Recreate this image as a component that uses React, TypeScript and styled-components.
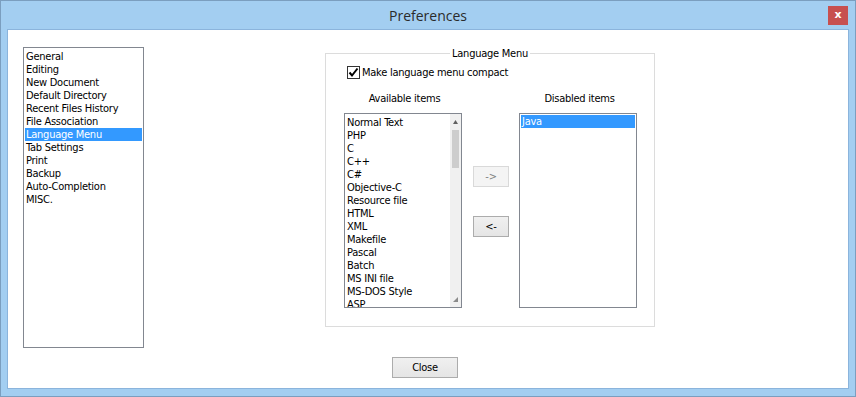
import { styled, createGlobalStyle } from 'styled-components';

const GlobalStyle = createGlobalStyle`
  html, body {
    margin: 0;
    padding: 0;
    background: #ffffff;
  }
  * {
    box-sizing: border-box;
  }
`;

const Frame = styled.div`
  width: 856px;
  height: 397px;
  display: flex;
  flex-direction: column;
  padding: 0 6px 7px;
  background: #a3cef1;
  border: 1px solid #7b9ebf;
  font-family: 'DejaVu Sans Condensed', 'Liberation Sans', sans-serif;
  font-size: 11px;
  letter-spacing: -0.25px;
  color: #000;
`;

const TitleBar = styled.div`
  height: 28px;
  display: grid;
  grid-template-columns: 1fr auto 1fr;
  align-items: center;
`;

const Title = styled.div`
  grid-column: 2;
  font-family: 'Open Sans', 'Noto Sans', sans-serif;
  font-size: 14px;
  letter-spacing: 0;
  color: #2b2b2b;
  line-height: 20px;
  padding-top: 1px;
`;

const CloseX = styled.div`
  grid-column: 3;
  justify-self: end;
  margin-right: 1px;
  width: 20px;
  height: 19px;
  background: #c75050;
  color: #fff;
  font-family: 'DejaVu Sans', sans-serif;
  font-weight: bold;
  font-size: 11px;
  letter-spacing: 0;
  line-height: 18px;
  text-align: center;
`;

const Client = styled.div`
  flex: 1;
  display: flex;
  flex-direction: column;
  background: #ffffff;
  border: 1px solid #8bb4dc;
`;

const MainRow = styled.div`
  display: flex;
  align-items: flex-start;
  padding: 17px 0 0 15px;
`;

const ListBox = styled.div<{ $w: number; $h: number }>`
  width: ${({ $w }) => $w}px;
  height: ${({ $h }) => $h}px;
  border: 1px solid #828790;
  background: #fff;
  display: flex;
  overflow: hidden;
`;

const Items = styled.div<{ $top?: number }>`
  flex: 1;
  padding: ${({ $top }) => $top ?? 1}px 1px 1px;
  overflow: hidden;
`;

const Item = styled.div<{ $selected?: boolean }>`
  height: 13px;
  line-height: 13px;
  padding-left: 1px;
  white-space: nowrap;
  background: ${({ $selected }) => ($selected ? '#3399ff' : 'transparent')};
  color: ${({ $selected }) => ($selected ? '#ffffff' : '#000000')};
`;

const ScrollBar = styled.div`
  width: 11px;
  display: flex;
  flex-direction: column;
  align-items: center;
  background: #f0f0f0;
`;

const ScrollArrow = styled.div`
  height: 15px;
  width: 100%;
  display: flex;
  align-items: center;
  justify-content: center;
`;

const Thumb = styled.div`
  width: 7px;
  height: 38px;
  margin-top: 1px;
  background: #cdcdcd;
`;

const ScrollSpacer = styled.div`
  flex: 1;
`;

const Group = styled.fieldset`
  margin: 0 0 0 181px;
  width: 330px;
  padding: 0 9px 18px;
  border: 1px solid #dcdcdc;
`;

const Legend = styled.legend`
  margin: 0 auto;
  padding: 0 2px;
  line-height: 13px;
`;

const GroupBody = styled.div`
  padding-left: 9px;
`;

const CheckRow = styled.label`
  display: flex;
  align-items: center;
  gap: 2px;
  height: 13px;
  margin: 6px 0 0 3px;
`;

const CheckBox = styled.span`
  width: 13px;
  height: 13px;
  border: 1px solid #333;
  background: #fff;
  display: flex;
  align-items: center;
  justify-content: center;
`;

const Columns = styled.div`
  display: flex;
  align-items: flex-start;
  margin-top: 13px;
`;

const Column = styled.div<{ $gap?: number }>`
  display: flex;
  flex-direction: column;
  align-items: center;
  margin-left: ${({ $gap }) => $gap ?? 0}px;
`;

const ColumnLabel = styled.div`
  height: 13px;
  line-height: 13px;
  margin-bottom: 8px;
  padding-left: 3px;
`;

const ButtonStack = styled.div`
  display: flex;
  flex-direction: column;
  gap: 29px;
  margin: 74px 0 0 11px;
`;

const PushButton = styled.button<{ $w: number; $disabled?: boolean }>`
  width: ${({ $w }) => $w}px;
  height: 21px;
  padding: 0;
  font-family: inherit;
  font-size: 11px;
  letter-spacing: -0.25px;
  border: 1px solid ${({ $disabled }) => ($disabled ? '#d9d9d9' : '#acacac')};
  background: ${({ $disabled }) => ($disabled ? '#f4f4f4' : 'linear-gradient(#f0f0f0, #e5e5e5)')};
  color: ${({ $disabled }) => ($disabled ? '#838383' : '#000')};
`;

const Footer = styled.div`
  display: flex;
  padding: 9px 0 0 384px;
`;

const navItems = [
  'General',
  'Editing',
  'New Document',
  'Default Directory',
  'Recent Files History',
  'File Association',
  'Language Menu',
  'Tab Settings',
  'Print',
  'Backup',
  'Auto-Completion',
  'MISC.',
];

const availableItems = [
  'Normal Text',
  'PHP',
  'C',
  'C++',
  'C#',
  'Objective-C',
  'Resource file',
  'HTML',
  'XML',
  'Makefile',
  'Pascal',
  'Batch',
  'MS INI file',
  'MS-DOS Style',
  'ASP',
];

const App = () => {
  return (
    <>
      <GlobalStyle />
      <Frame>
        <TitleBar>
          <Title>Preferences</Title>
          <CloseX>x</CloseX>
        </TitleBar>
        <Client>
          <MainRow>
            <ListBox $w={121} $h={301}>
              <Items $top={2}>
                {navItems.map((n) => (
                  <Item key={n} $selected={n === 'Language Menu'}>
                    {n}
                  </Item>
                ))}
              </Items>
            </ListBox>
            <Group>
              <Legend>Language Menu</Legend>
              <GroupBody>
                <CheckRow>
                  <CheckBox>
                    <svg width='11' height='11' viewBox='0 0 11 11'>
                      <path d='M1.5 5.5 L4 8.5 L9.5 1.5' fill='none' stroke='#000' strokeWidth='2' />
                    </svg>
                  </CheckBox>
                  Make language menu compact
                </CheckRow>
                <Columns>
                  <Column>
                    <ColumnLabel>Available items</ColumnLabel>
                    <ListBox $w={118} $h={195}>
                      <Items $top={2}>
                        {availableItems.map((n) => (
                          <Item key={n}>{n}</Item>
                        ))}
                      </Items>
                      <ScrollBar>
                        <ScrollArrow>
                          <svg width='5' height='4' viewBox='0 0 5 4'>
                            <path d='M0 4 L2.5 0 L5 4 Z' fill='#606060' />
                          </svg>
                        </ScrollArrow>
                        <Thumb />
                        <ScrollSpacer />
                        <ScrollArrow>
                          <svg width='5' height='5' viewBox='0 0 5 5'>
                            <path d='M5 0 L5 5 L0 5 Z' fill='#8a8a8a' />
                          </svg>
                        </ScrollArrow>
                      </ScrollBar>
                    </ListBox>
                  </Column>
                  <ButtonStack>
                    <PushButton $w={36} $disabled>
                      -&gt;
                    </PushButton>
                    <PushButton $w={36}>&lt;-</PushButton>
                  </ButtonStack>
                  <Column $gap={10}>
                    <ColumnLabel>Disabled items</ColumnLabel>
                    <ListBox $w={118} $h={195}>
                      <Items>
                        <Item $selected>Java</Item>
                      </Items>
                    </ListBox>
                  </Column>
                </Columns>
              </GroupBody>
            </Group>
          </MainRow>
          <Footer>
            <PushButton $w={66}>Close</PushButton>
          </Footer>
        </Client>
      </Frame>
    </>
  );
};

export default App;
